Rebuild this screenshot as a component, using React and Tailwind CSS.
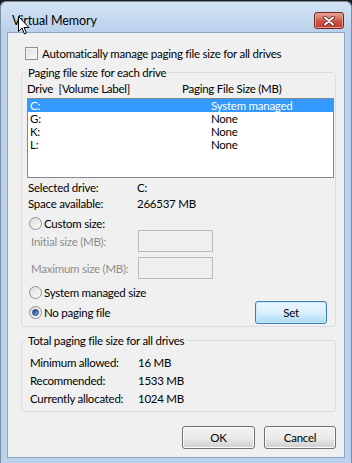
import React from "react";

const font = { fontFamily: "Lato, 'Noto Sans', sans-serif" };

const Radio = ({ checked }) => (
  <span className="relative inline-block w-[13px] h-[13px] rounded-full border border-[#8f9296] bg-gradient-to-br from-[#dcdcdc] to-[#fbfbfb] shrink-0">
    {checked && (
      <span className="absolute left-[2px] top-[2px] w-[7px] h-[7px] rounded-full bg-gradient-to-br from-[#1b3e6e] via-[#3a78c8] to-[#9cc8f4] border border-[#1f4a7f]" />
    )}
  </span>
);

const GroupBox = ({ label, className = "", children }) => (
  <div className={`relative border border-[#d5dfe5] rounded-[3px] ${className}`}>
    <span className="absolute left-[4px] top-[-8px] h-[15px] leading-[15px] px-[2px] bg-[#f0f0f0] text-black">
      {label}
    </span>
    {children}
  </div>
);

const Btn = ({ children, focused, className = "" }) => (
  <div
    className={`flex items-center justify-center h-[23px] rounded-[3px] border ${
      focused
        ? "border-[#3c7fb1] bg-gradient-to-b from-[#eaf6fd] via-[#d9f0fc] to-[#a7d9f5] shadow-[inset_0_0_0_1px_#c9e8fa]"
        : "border-[#707070] bg-gradient-to-b from-[#f2f2f2] via-[#ebebeb] to-[#cfcfcf] shadow-[inset_0_0_0_1px_#fcfcfc]"
    } text-black ${className}`}
  >
    {children}
  </div>
);

export default function App() {
  const drives = [
    { d: "C:", s: "System managed", sel: true },
    { d: "G:", s: "None" },
    { d: "K:", s: "None" },
    { d: "L:", s: "None" },
  ];

  return (
    <div className="w-[352px] h-[463px] bg-[#1c1c1c] pt-[1px] text-[11.5px] tracking-[-0.25px] leading-[15px] whitespace-nowrap select-none" style={font}>
      <div className="relative h-[462px] flex flex-col rounded-t-[6px] border border-[#7a8ea8] border-b-0 bg-[#bcd2ec]">
        {/* title bar */}
        <div className="h-[30px] shrink-0 flex items-start rounded-t-[6px] bg-gradient-to-b from-[#d3e2f4] via-[#c6daf0] to-[#bad1eb]">
          <span className="mt-[11px] ml-[11px] text-[12.5px] tracking-[-0.1px] leading-[16px] text-black">Virtual Memory</span>
          <div className="ml-auto mt-[10px] mr-[7px] w-[30px] h-[17px] rounded-[3px] border border-[#6e2a25] bg-gradient-to-b from-[#e6a99f] via-[#cf5a4b] to-[#c0392b] flex items-center justify-center shadow-[inset_0_0_0_1px_#e89a8e]">
            <svg width="12" height="10" viewBox="0 0 12 10">
              <path d="M2 1.5 L10 8.5 M10 1.5 L2 8.5" stroke="#5a1e1a" strokeWidth="3.6" strokeLinecap="round" />
              <path d="M2 1.5 L10 8.5 M10 1.5 L2 8.5" stroke="#ffffff" strokeWidth="2" strokeLinecap="round" />
            </svg>
          </div>
        </div>

        {/* cursor */}
        <svg className="absolute left-[17px] top-[14px]" width="12" height="19" viewBox="0 0 12 19">
          <path d="M0.5 0.5 L0.5 15.5 L4 12 L6.5 18 L8.5 17 L6 11.5 L11 11.5 Z" fill="#fff" stroke="#000" strokeWidth="1" strokeLinejoin="round" />
        </svg>

        {/* client area */}
        <div className="mx-[6px] h-[426px] border border-[#8fa7c6] bg-[#f0f0f0] flex flex-col pl-[13px] pr-[8px] pt-[14px] text-black">
          <div className="flex items-center h-[13px] ml-[4px]">
            <span className="w-[13px] h-[13px] border border-[#8e8f8f] bg-gradient-to-br from-[#dedede] to-[#fafafa] shadow-[inset_0_0_0_1px_#f4f4f4]" />
            <span className="ml-[4px]">Automatically manage paging file size for all drives</span>
          </div>

          <GroupBox label="Paging file size for each drive" className="mt-[12px] h-[255px] pt-[8px] pl-[5px]">
            <div className="flex h-[15px]">
              <span className="w-[155px]">Drive&nbsp; [Volume Label]</span>
              <span>Paging File Size (MB)</span>
            </div>
            <div className="mt-[2px] mr-[1px] h-[80px] border border-[#828790] bg-white">
              {drives.map((r) => (
                <div
                  key={r.d}
                  className={`flex h-[13px] leading-[13px] ${r.sel ? "bg-[#3399ff] text-white" : "text-black"}`}
                >
                  <span className="w-[183px] pl-[2px]">{r.d}</span>
                  <span>{r.s}</span>
                </div>
              ))}
            </div>
            <div className="flex h-[16px] items-center mt-[1px] pl-[1px]">
              <span className="w-[109px]">Selected drive:</span>
              <span>C:</span>
            </div>
            <div className="flex h-[16px] items-center pl-[1px]">
              <span className="w-[109px]">Space available:</span>
              <span>266537 MB</span>
            </div>
            <div className="flex h-[14px] items-center mt-[5px] pl-[2px]">
              <Radio />
              <span className="ml-[2px]">Custom size:</span>
            </div>
            <div className="flex h-[22px] items-center pl-[4px]">
              <span className="w-[107px] text-[#8d8d8d]">Initial size (MB):</span>
              <span className="w-[75px] h-[22px] border border-[#b9bcbf] bg-[#f0f0f0]" />
            </div>
            <div className="flex h-[22px] items-center mt-[5px] pl-[4px]">
              <span className="w-[107px] text-[#8d8d8d]">Maximum size (MB):</span>
              <span className="w-[75px] h-[22px] border border-[#b9bcbf] bg-[#f0f0f0]" />
            </div>
            <div className="flex h-[14px] items-center mt-[6px] pl-[2px]">
              <Radio />
              <span className="ml-[2px]">System managed size</span>
            </div>
            <div className="flex h-[22px] items-center mt-[2px] pl-[2px] pr-[8px]">
              <Radio checked />
              <span className="ml-[2px]">No paging file</span>
              <Btn focused className="ml-auto w-[72px] h-[22px]">Set</Btn>
            </div>
          </GroupBox>

          <GroupBox label="Total paging file size for all drives" className="mt-[13px] h-[72px] pt-[12px] pl-[8px]">
            {[
              ["Minimum allowed:", "16 MB"],
              ["Recommended:", "1533 MB"],
              ["Currently allocated:", "1024 MB"],
            ].map(([k, v]) => (
              <div key={k} className="flex h-[18px] items-center">
                <span className="w-[108px]">{k}</span>
                <span>{v}</span>
              </div>
            ))}
          </GroupBox>

          <div className="flex justify-end gap-[9px] mt-[14px]">
            <Btn className="w-[73px]">OK</Btn>
            <Btn className="w-[72px]">Cancel</Btn>
          </div>
        </div>
      </div>
    </div>
  );
}
